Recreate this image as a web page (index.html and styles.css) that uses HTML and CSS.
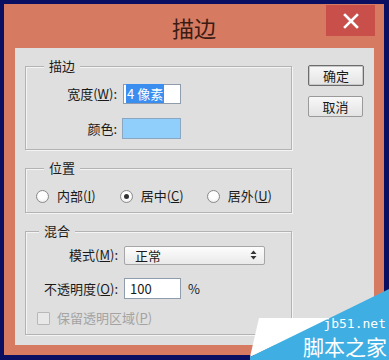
FILE: index.html
```html
<!DOCTYPE html>
<html>
<head>
<meta charset="utf-8">
<link rel="stylesheet" href="styles.css">
</head>
<body>
<div class="screen">
  <div class="window">
    <div class="titlebar">
      <div class="title">描边</div>
      <div class="close">
        <svg width="16" height="16" viewBox="0 0 16 16"><path d="M2 2 L14 14 M14 2 L2 14" stroke="#fff" stroke-width="2.6" stroke-linecap="square"/></svg>
      </div>
    </div>
    <div class="client">
      <div class="groups">
        <div class="group g1">
          <span class="legend">描边</span>
          <div class="form">
            <label class="lbl">宽度(<u>W</u>):</label>
            <div class="input w-input"><span class="sel">4 像素</span></div>
            <label class="lbl">颜色:</label>
            <div class="swatch"></div>
          </div>
        </div>
        <div class="group g2">
          <span class="legend">位置</span>
          <div class="radios">
            <div class="radio"><span class="dot"></span>内部(<u>I</u>)</div>
            <div class="radio"><span class="dot on"></span>居中(<u>C</u>)</div>
            <div class="radio"><span class="dot"></span>居外(<u>U</u>)</div>
          </div>
        </div>
        <div class="group g3">
          <span class="legend">混合</span>
          <div class="form f3">
            <label class="lbl">模式(<u>M</u>):</label>
            <div class="select"><span>正常</span>
              <svg width="7" height="10" viewBox="0 0 7 10"><path d="M3.5 0.5 L6.5 4 L0.5 4 Z M0.5 6 L6.5 6 L3.5 9.5 Z" fill="#333"/></svg>
            </div>
            <label class="lbl">不透明度(<u>O</u>):</label>
            <div class="op-row"><div class="input o-input">100</div><span class="pct">%</span></div>
          </div>
          <div class="check"><span class="box"></span>保留透明区域(<u>P</u>)</div>
        </div>
      </div>
      <div class="buttons">
        <div class="btn default">确定</div>
        <div class="btn">取消</div>
      </div>
    </div>
  </div>
  <svg class="wm" width="139" height="71" viewBox="0 0 139 71">
    <polygon points="9,29 82,29 0,68" fill="#ffffff"/>
    <polygon points="139,0 139,71 0,71 0,68" fill="#3eaee3"/>
    <text x="136" y="39" text-anchor="end" class="wm1">jb51.net</text>
    <text x="137" y="66" text-anchor="end" class="wm2">脚本之家</text>
  </svg>
</div>
</body>
</html>
```
FILE: styles.css
```css
* { box-sizing: border-box; }
html, body { margin: 0; padding: 0; }
body { font-family: "Noto Sans CJK SC", "Noto Sans", sans-serif; font-size: 13px; color: #1a1a1a; }
.screen {
  width: 389px; height: 360px; background: #0b0f62;
  padding: 4px 5px 5px 4px; position: relative; overflow: hidden;
}
.window {
  width: 380px; height: 351px; background: #d67a62;
  display: flex; flex-direction: column;
}
.titlebar {
  height: 44px; display: grid; grid-template-columns: 1fr auto 1fr; align-items: start;
}
.title {
  grid-column: 2; font-size: 22px; line-height: 44px; color: #3b1b12; margin-top: 1px;
}
.close {
  grid-column: 3; justify-self: end; margin-right: 9px; margin-top: 1px;
  width: 49px; height: 31px; background: #c84f4a;
  display: flex; align-items: center; justify-content: center;
}
.client {
  margin: 0 10px 0 11px; height: 297px; background: #dfdfdf;
  display: flex; padding: 18px 0 0 10px;
}
.groups { width: 267px; display: flex; flex-direction: column; gap: 18px; }
.group {
  border: 1px solid #b3b3b3; box-shadow: inset 1px 1px 0 #f4f4f4, 1px 1px 0 #f4f4f4;
  padding-left: 16px;
}
.legend {
  display: block; width: max-content; background: #dfdfdf; margin: -10px 0 0 2px;
  padding: 0 5px; line-height: 18px; font-size: 13px;
}
.g1 { height: 84px; }
.g2 { height: 45px; }
.g3 { height: 104px; padding-left: 11px; }
.form {
  display: grid; grid-template-columns: 75px auto; column-gap: 6px; row-gap: 14px;
  align-items: center; margin-top: 9px;
}
.lbl { text-align: right; white-space: nowrap; line-height: 20px; }
.input {
  background: #fff; border: 1px solid #8e9cae; height: 20px; line-height: 18px; padding-left: 2px;
}
.w-input { width: 58px; }
.sel { background: #3a8ef0; color: #fff; padding: 0 1px; }
.swatch { width: 59px; height: 21px; background: #90cffb; border: 1px solid #8aa6c0; margin-left: -1px; }
.radios { display: flex; margin-top: 9px; margin-left: -6px; }
.radio { display: flex; align-items: center; line-height: 20px; white-space: nowrap; margin-right: 24px; }
.radio:nth-child(2) { margin-right: 23px; }
.dot {
  width: 13px; height: 13px; border-radius: 50%; border: 1px solid #8a8a8a;
  background: radial-gradient(circle at 50% 40%, #ffffff 40%, #e4e4e4 100%);
  margin-right: 8px; position: relative;
}
.dot.on::after {
  content: ""; position: absolute; left: 3px; top: 3px; width: 5px; height: 5px;
  border-radius: 50%; background: #333;
}
.f3 { grid-template-columns: 81px auto; row-gap: 13px; margin-top: 5px; }
.select {
  width: 141px; height: 19px; border: 1px solid #a6a6a6; border-radius: 2px;
  background: linear-gradient(#fdfdfd, #e9e9e9); display: flex; align-items: center;
  justify-content: space-between; padding: 0 7px 0 10px; line-height: 17px;
}
.op-row { display: flex; align-items: center; }
.o-input { width: 57px; height: 21px; padding-left: 5px; line-height: 19px; }
.pct { margin-left: 7px; }
.check { display: flex; align-items: center; color: #a3a3a3; margin-top: 10px; margin-left: 0; line-height: 18px; }
.box { width: 13px; height: 13px; border: 1px solid #b8b8b8; background: #e8e8e8; margin-right: 7px; border-radius: 1px; }
.buttons { margin-left: 16px; display: flex; flex-direction: column; gap: 10px; margin-top: -1px; }
.btn {
  width: 55px; height: 21px; border: 1px solid #9a9a9a; border-radius: 2px;
  background: linear-gradient(#f8f8f8, #e3e3e3); text-align: center; line-height: 19px; font-size: 13px;
}
.btn.default { width: 56px; border: 1px solid #6c6c6c; box-shadow: inset 0 0 0 1px #c8c8c8; }
.wm { position: absolute; left: 250px; top: 289px; }
.wm1 { font-family: "DejaVu Sans Mono", monospace; font-size: 13px; fill: #fff; }
.wm2 { font-family: "Noto Sans CJK SC", sans-serif; font-size: 21px; fill: #fff; }
```
